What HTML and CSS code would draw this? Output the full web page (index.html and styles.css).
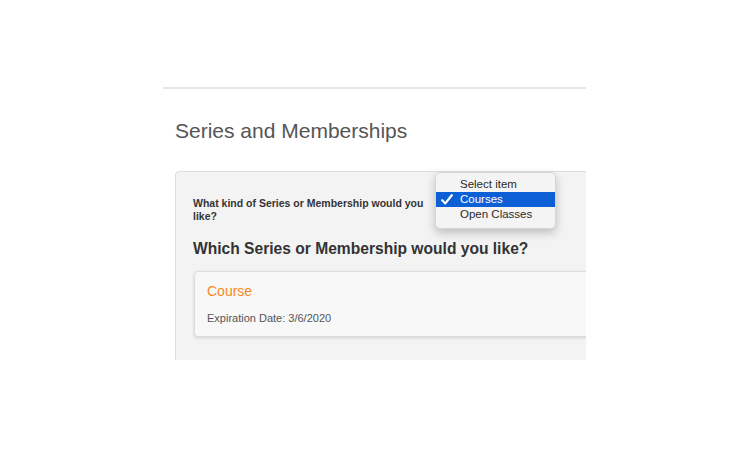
FILE: index.html
```html
<!DOCTYPE html>
<html>
<head>
<meta charset="utf-8">
<link rel="stylesheet" href="styles.css">
</head>
<body>
<div class="page">
  <div class="frame">
    <h1 class="title">Series and Memberships</h1>
    <div class="panel">
      <div class="question-row">
        <label class="question">What kind of Series or Membership would you like?</label>
        <div class="select-slot">
          <ul class="menu">
            <li class="menu-item">Select item</li>
            <li class="menu-item selected">
              <svg class="check" width="12" height="11" viewBox="0 0 12 11"><path d="M1.2 6.2 L4.3 9.4 L10.8 1.2" fill="none" stroke="#fff" stroke-width="2.2" stroke-linecap="round" stroke-linejoin="round"/></svg>
              Courses
            </li>
            <li class="menu-item">Open Classes</li>
          </ul>
        </div>
      </div>
      <h2 class="subtitle">Which Series or Membership would you like?</h2>
      <div class="card">
        <div class="card-title">Course</div>
        <div class="card-meta">Expiration Date: 3/6/2020</div>
      </div>
    </div>
  </div>
</div>
</body>
</html>
```

FILE: styles.css
```css
html, body {
  margin: 0;
  padding: 0;
  background: #ffffff;
}
body {
  font-family: "Liberation Sans", Arial, Helvetica, sans-serif;
}
.page {
  padding: 87px 0 0 163px;
}
.frame {
  width: 423px;
  height: 273px;
  overflow: hidden;
  border-top: 2px solid #e6e6e6;
  padding-left: 12px;
  box-sizing: border-box;
}
.title {
  margin: 30px 0 0 0;
  font-size: 21px;
  font-weight: normal;
  line-height: 24px;
  color: #555555;
}
.panel {
  margin-top: 28px;
  width: 520px;
  height: 260px;
  background: #f3f3f3;
  border: 1px solid #dddddd;
  border-radius: 4px;
  box-sizing: border-box;
  padding: 25px 0 0 17px;
}
.question-row {
  display: flex;
  align-items: flex-start;
  position: relative;
}
.question {
  width: 240px;
  font-size: 10.5px;
  line-height: 13px;
  font-weight: bold;
  color: #333333;
}
.select-slot {
  position: relative;
  width: 121px;
  height: 20px;
  margin-left: 2px;
}
.menu {
  position: absolute;
  left: 0;
  top: -25px;
  width: 121px;
  margin: 0;
  padding: 4px 0 6px 0;
  list-style: none;
  background: #f4f4f4;
  border: 1px solid #d6d6d6;
  border-radius: 5px;
  box-shadow: 0 4px 10px rgba(0,0,0,0.22);
  box-sizing: border-box;
  z-index: 5;
}
.menu-item {
  height: 15px;
  line-height: 15px;
  font-size: 11.5px;
  color: #2a2a2a;
  padding-left: 24px;
  position: relative;
}
.menu-item.selected {
  background: #0d5fd6;
  color: #ffffff;
}
.check {
  position: absolute;
  left: 5px;
  top: 2px;
}
.subtitle {
  margin: 16px 0 0 0;
  font-size: 15.6px;
  line-height: 20px;
  font-weight: bold;
  color: #333333;
}
.card {
  margin-top: 12px;
  margin-left: 1px;
  width: 480px;
  height: 66px;
  box-sizing: border-box;
  background: #f8f8f8;
  border: 1px solid #dddddd;
  border-radius: 4px;
  box-shadow: 0 1px 3px rgba(0,0,0,0.14);
  padding: 11px 0 0 12px;
}
.card-title {
  font-size: 14px;
  line-height: 17px;
  color: #f7881e;
}
.card-meta {
  margin-top: 12px;
  font-size: 11px;
  line-height: 13px;
  color: #555555;
}
```
